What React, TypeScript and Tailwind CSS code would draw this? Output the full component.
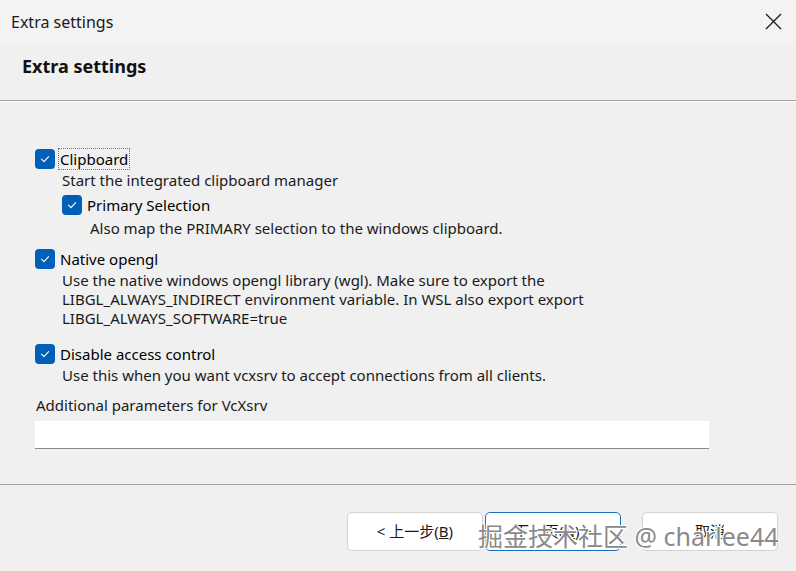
import React from "react";

const FONT = '"Noto Sans", "Noto Sans CJK SC", sans-serif';

function Check({ label, focused }: { label: string; focused?: boolean }) {
  return (
    <div className="flex h-[20px] items-center">
      <span className="flex h-[20px] w-[20px] shrink-0 items-center justify-center rounded-[4px] bg-[#005fb8]">
        <svg width="12" height="12" viewBox="0 0 12 12" fill="none">
          <path d="M2.5 6.2 L5 8.6 L9.6 3.6" stroke="white" strokeWidth="1.1" strokeLinecap="round" strokeLinejoin="round" />
        </svg>
      </span>
      <span
        className={
          "ml-[4px] px-[1px] leading-[20px] " +
          (focused ? "outline outline-1 outline-dotted outline-[#777]" : "")
        }
      >
        {label}
      </span>
    </div>
  );
}

function Desc({ children }: { children: React.ReactNode }) {
  return <div className="leading-[19px] text-[#1a1a1a]">{children}</div>;
}

function Btn({ children, primary }: { children: React.ReactNode; primary?: boolean }) {
  return (
    <div
      className={
        "flex h-[39px] w-[136px] items-center justify-center rounded-[5px] bg-white text-[15px] text-[#1a1a1a] " +
        (primary ? "border border-[#1c6fc0]" : "border border-[#d3d3d3]")
      }
    >
      {children}
    </div>
  );
}

export default function App() {
  return (
    <div
      className="relative flex h-[571px] w-[796px] flex-col overflow-hidden bg-[#f0f0f0] text-[15px] text-black"
      style={{ fontFamily: FONT }}
    >
      {/* title bar */}
      <div className="flex h-[43px] shrink-0 items-center justify-between bg-[#f3f3f3] pl-[11px] pr-[14px]">
        <span className="text-[16px] text-[#1a1a1a]">Extra settings</span>
        <svg width="17" height="17" viewBox="0 0 17 17">
          <path d="M1 1 L16 16 M16 1 L1 16" stroke="#1a1a1a" strokeWidth="1.3" />
        </svg>
      </div>

      {/* header */}
      <div className="flex h-[58px] shrink-0 items-start border-b border-[#a0a0a0] pl-[22px] pt-[9px]">
        <span className="text-[18px] font-bold leading-[28px] text-[#111]">Extra settings</span>
      </div>
      <div className="h-px bg-white" />

      {/* body */}
      <div className="flex flex-1 flex-col pl-[35px] pt-[47px]">
        <Check label="Clipboard" focused />
        <div className="ml-[27px] mt-[2px]">
          <Desc>Start the integrated clipboard manager</Desc>
          <div className="mt-[5px]">
            <Check label="Primary Selection" />
          </div>
          <div className="ml-[28px] mt-[4px]">
            <Desc>Also map the PRIMARY selection to the windows clipboard.</Desc>
          </div>
        </div>

        <div className="mt-[11px]">
          <Check label="Native opengl" />
        </div>
        <div className="ml-[27px] mt-[2px]">
          <Desc>
            Use the native windows opengl library (wgl). Make sure to export the
          </Desc>
          <Desc>
            LIBGL_ALWAYS_INDIRECT environment variable. In WSL also export export
          </Desc>
          <Desc>LIBGL_ALWAYS_SOFTWARE=true</Desc>
        </div>

        <div className="mt-[16px]">
          <Check label="Disable access control" />
        </div>
        <div className="ml-[27px] mt-[2px]">
          <Desc>Use this when you want vcxsrv to accept connections from all clients.</Desc>
        </div>

        <div className="ml-[1px] mt-[10px] leading-[20px] text-[#1a1a1a]">
          Additional parameters for VcXsrv
        </div>
        <div className="mt-[6px] h-[28px] w-[674px] border-b border-[#8a8a8a] bg-white" />
      </div>

      {/* footer */}
      <div className="h-px shrink-0 bg-[#a0a0a0]" />
      <div className="flex h-[86px] shrink-0 items-start pl-[347px] pt-[27px]">
        <Btn>&lt; 上一步(<span className="underline">B</span>)</Btn>
        <div className="ml-[2px]">
          <Btn primary>
            下一页(<span className="underline">N</span>) &gt;
          </Btn>
        </div>
        <div className="ml-[21px]">
          <Btn>取消</Btn>
        </div>
      </div>

      {/* watermark */}
      <div
        className="pointer-events-none absolute left-[478px] top-[520px] text-[25px] leading-[32px] text-[#8a8a8a]"
        style={{ textShadow: "1px 1px 0 #fff, -1px -1px 0 #fff, 1px -1px 0 #fff, -1px 1px 0 #fff" }}
      >
        掘金技术社区 @ charlee44
      </div>
    </div>
  );
}
